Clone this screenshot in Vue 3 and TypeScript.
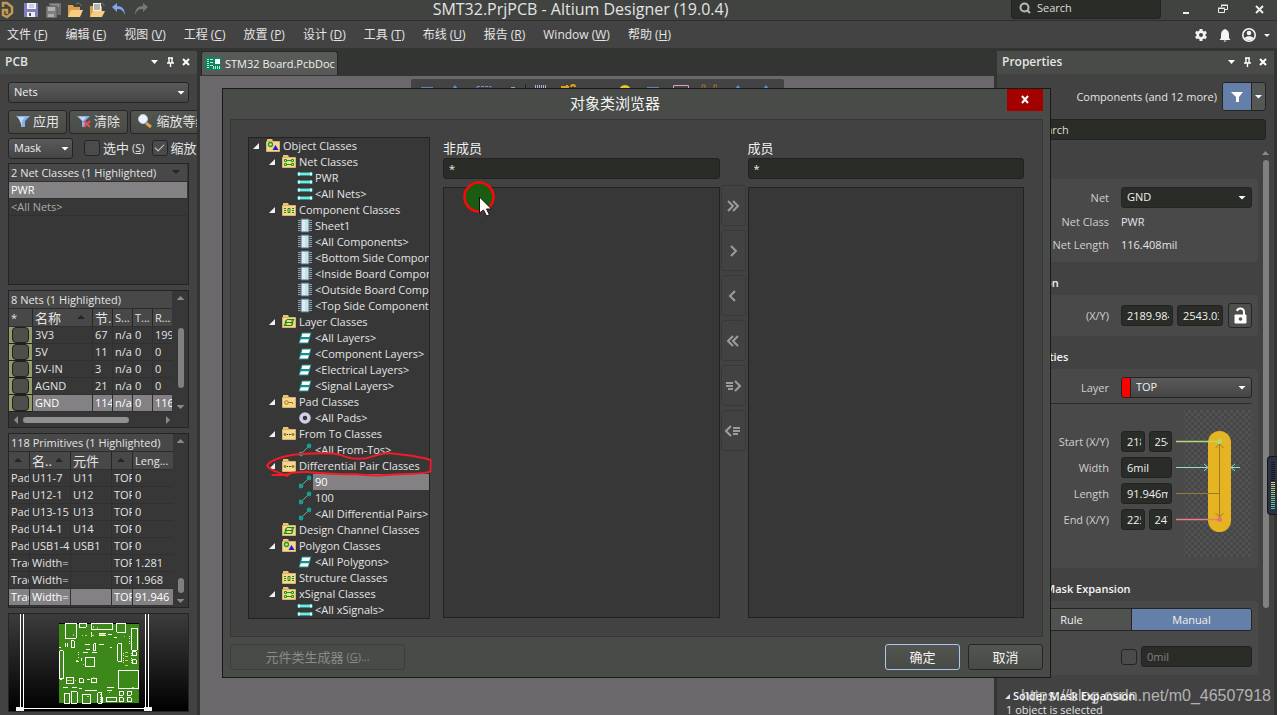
<script setup lang="ts">
import { ref } from 'vue'

interface MenuEntry { label: string; key: string }
interface TreeNode { level: number; icon: string; text: string; open?: boolean; selected?: boolean }

const menus: MenuEntry[] = [
  { label: '文件', key: 'F' },
  { label: '编辑', key: 'E' },
  { label: '视图', key: 'V' },
  { label: '工程', key: 'C' },
  { label: '放置', key: 'P' },
  { label: '设计', key: 'D' },
  { label: '工具', key: 'T' },
  { label: '布线', key: 'U' },
  { label: '报告', key: 'R' },
  { label: 'Window', key: 'W' },
  { label: '帮助', key: 'H' },
]

const tree: TreeNode[] = [
  { level: 0, icon: 'f-shape', text: 'Object Classes', open: true },
  { level: 1, icon: 'f-net', text: 'Net Classes', open: true },
  { level: 2, icon: 'net', text: 'PWR' },
  { level: 2, icon: 'net', text: '<All Nets>' },
  { level: 1, icon: 'f-comp', text: 'Component Classes', open: true },
  { level: 2, icon: 'chip', text: 'Sheet1' },
  { level: 2, icon: 'chip', text: '<All Components>' },
  { level: 2, icon: 'chip', text: '<Bottom Side Components>' },
  { level: 2, icon: 'chip', text: '<Inside Board Components>' },
  { level: 2, icon: 'chip', text: '<Outside Board Components>' },
  { level: 2, icon: 'chip', text: '<Top Side Components>' },
  { level: 1, icon: 'f-layer', text: 'Layer Classes', open: true },
  { level: 2, icon: 'layer', text: '<All Layers>' },
  { level: 2, icon: 'layer', text: '<Component Layers>' },
  { level: 2, icon: 'layer', text: '<Electrical Layers>' },
  { level: 2, icon: 'layer', text: '<Signal Layers>' },
  { level: 1, icon: 'f-pad', text: 'Pad Classes', open: true },
  { level: 2, icon: 'pad', text: '<All Pads>' },
  { level: 1, icon: 'f-dots', text: 'From To Classes', open: true },
  { level: 2, icon: 'pair', text: '<All From-Tos>' },
  { level: 1, icon: 'f-dots', text: 'Differential Pair Classes', open: true },
  { level: 2, icon: 'pair', text: '90', selected: true },
  { level: 2, icon: 'pair', text: '100' },
  { level: 2, icon: 'pair', text: '<All Differential Pairs>' },
  { level: 1, icon: 'f-layer', text: 'Design Channel Classes' },
  { level: 1, icon: 'f-shape', text: 'Polygon Classes', open: true },
  { level: 2, icon: 'layer', text: '<All Polygons>' },
  { level: 1, icon: 'f-comp', text: 'Structure Classes' },
  { level: 1, icon: 'f-net', text: 'xSignal Classes', open: true },
  { level: 2, icon: 'net', text: '<All xSignals>' },
]

const nets = [
  ['3V3', '67', 'n/a', '0', '199'],
  ['5V', '11', 'n/a', '0', '0'],
  ['5V-IN', '3', 'n/a', '0', '0'],
  ['AGND', '21', 'n/a', '0', '0'],
  ['GND', '114', 'n/a', '0', '116'],
]

const primitives = [
  ['Pad', 'U11-7', 'U11', 'TOP', '0'],
  ['Pad', 'U12-1', 'U12', 'TOP', '0'],
  ['Pad', 'U13-15', 'U13', 'TOP', '0'],
  ['Pad', 'U14-1', 'U14', 'TOP', '0'],
  ['Pad', 'USB1-4', 'USB1', 'TOP', '0'],
  ['Trac', 'Width=', '', 'TOP', '1.281'],
  ['Trac', 'Width=', '', 'TOP', '1.968'],
  ['Trac', 'Width=', '', 'TOP', '91.946'],
]

const moves = [
  { name: '全部添加', d: 'M3 3l5 5-5 5M8 3l5 5-5 5' },
  { name: '添加', d: 'M6 3l5 5-5 5' },
  { name: '移除', d: 'M10 3L5 8l5 5' },
  { name: '全部移除', d: 'M8 3L3 8l5 5M13 3L8 8l5 5' },
  { name: '添加选中', d: 'M10 3l5 5-5 5M1 5h7M1 8h7M3 11h5' },
  { name: '移除选中', d: 'M6 3L1 8l5 5M8 5h7M8 8h7M8 11h5' },
]

const tools = ['bar', 'tip', 'dash', 'dot', 'comb', 'route', 'none', 'via', 'bar', 'rect', 'rings', 'tip', 'tip']

const mode = ref('Manual')
const filterLeft = ref('*')
const filterRight = ref('*')
</script>

<template>
  <div class="app">
    <header class="titlebar">
      <div class="quick">
        <svg class="logo" width="14" height="18" viewBox="0 0 14 18" fill="none" stroke="#c39a54" stroke-width="2.500"><path d="M2 6V2h4l5 4v6l-5 4-4-2V9h4v4" /></svg>
        <button type="button" aria-label="Save"><svg width="16" height="16" viewBox="0 0 16 16"><path d="M1 1h14v14H1z" fill="#7d7fc0" /><path d="M4 1h9v6H4z" fill="#f2f2f5" /><path d="M6 3h5M6 5h5" stroke="#a9a9c4" /><path d="M4 10h8v5H4z" fill="#eceef2" /><path d="M6 11h2v3H6z" fill="#555" /></svg></button>
        <button type="button" aria-label="Save all"><svg width="16" height="16" viewBox="0 0 16 16"><path d="M4 1h12v12H4z" fill="#6f6f6f" /><path d="M6 2h8v3H6z" fill="#8e8e8e" /><path d="M1 4h11v12H1z" fill="#7f7f7f" stroke="#444541" stroke-width=".6" /><path d="M3 5h7v4H3z" fill="#b0b0b0" /><path d="M3 12h6v3H3z" fill="#adadad" /></svg></button>
        <button type="button" aria-label="Open"><svg width="16" height="16" viewBox="0 0 16 16"><path d="M1 3h5l1 2h6v10H1z" fill="#d9a24e" /><path d="M4 8h12l-3 7H1z" fill="#f6cd82" /><path d="M9 2c3-2 5 0 5 2" stroke="#5f7f9c" fill="none" /></svg></button>
        <button type="button" aria-label="Open project"><svg width="16" height="16" viewBox="0 0 16 16"><path d="M1 4h12v11H1z" fill="#d9a24e" /><path d="M4 1h8v9H4z" fill="#f2f2f2" /><path d="M5 3h6M5 5h6M5 7h6" stroke="#777" /><path d="M4 9h12l-3 6H1z" fill="#f6cd82" /><path d="M12 1c2 0 3 1 3 3" stroke="#5f7f9c" fill="none" /></svg></button>
        <button type="button" aria-label="Undo"><svg width="16" height="16" viewBox="0 0 16 16"><path d="M6 1L1 5l5 5V7c4 0 6 1 8 6 0-6-3-9-8-9z" fill="#7ea4ee" /></svg></button>
        <button type="button" aria-label="Redo"><svg width="16" height="16" viewBox="0 0 16 16"><path d="M10 1l5 4-5 5V7c-4 0-6 1-8 6 0-6 3-9 8-9z" fill="#777977" /></svg></button>
      </div>
      <h1>SMT32.PrjPCB - Altium Designer (19.0.4)</h1>
      <label class="topsearch">
        <svg width="12" height="12" viewBox="0 0 12 12" fill="none" stroke="#b9b9b9" stroke-width="2"><circle cx="5.500" cy="5.500" r="4" /><path d="M8 8l3 3" /></svg>
        <input type="text" placeholder="Search" aria-label="Search" />
      </label>
      <div class="winbtns">
        <button type="button" aria-label="Minimize"><svg width="12" height="12" viewBox="0 0 12 12"><path d="M3 9h6v2H3z" fill="#eee" /></svg></button>
        <button type="button" aria-label="Restore"><svg width="12" height="12" viewBox="0 0 12 12" fill="none" stroke="#eee"><path d="M1.500 5.500h6v4h-6zM1 5h7M4.500 4V2.500h6v4H8M4 2h7" /></svg></button>
        <button type="button" aria-label="Close"><svg width="12" height="12" viewBox="0 0 12 12" stroke="#eee" stroke-width="2"><path d="M2 3l7 7M9 3l-7 7" /></svg></button>
      </div>
    </header>

    <nav class="menubar">
      <button v-for="m in menus" :key="m.key" type="button">{{ m.label }} (<u>{{ m.key }}</u>)</button>
      <div class="account">
        <button type="button" aria-label="Settings"><svg width="14" height="14" viewBox="0 0 14 14"><circle cx="7" cy="7" r="3.300" fill="none" stroke="#f4f4f4" stroke-width="2.600" /><path d="M7 1v2M7 11v2M1.800 4l1.700 1M10.500 9l1.700 1M1.800 10l1.700-1M10.500 5l1.700-1" stroke="#f4f4f4" stroke-width="3" /></svg></button>
        <button type="button" aria-label="Notifications"><svg width="12" height="14" viewBox="0 0 12 14" fill="#f4f4f4"><path d="M6 1c3 1 4 3 4 6v3l1.500 2H.5L2 10V7c0-3 1-5 4-6zM4.500 12.500h3L6 14z" /></svg></button>
        <button type="button" aria-label="Account" class="user"><svg width="28" height="14" viewBox="0 0 28 14"><circle cx="7" cy="7" r="6.200" fill="none" stroke="#f4f4f4" stroke-width="1.600" /><circle cx="7" cy="5" r="2.300" fill="#f4f4f4" /><path d="M2.500 10c2-2.500 7-2.500 9 0-2 3-7 3-9 0z" fill="#f4f4f4" /><path d="M22 6h6l-3 3z" fill="#f4f4f4" /></svg></button>
      </div>
    </nav>

    <main class="workspace">
      <aside class="panel left">
        <div class="panelhead">
          <h2>PCB</h2>
          <svg width="38" height="12" viewBox="0 0 38 12"><path d="M1 4h7L4.500 8z" fill="#fff" /><path d="M18 2h5M19 2v5M22 2v5M17 7h7M20.500 7v4" stroke="#fff" stroke-width="1.400" /><path d="M33 3l6 6M39 3l-6 6" stroke="#fff" stroke-width="2" /></svg>
        </div>
        <div class="leftbody">
          <div class="combo wide"><select aria-label="Object kind"><option>Nets</option></select></div>
          <div class="btnrow">
            <button type="button" class="btn"><svg width="14" height="14" viewBox="0 0 14 14"><path d="M0 2h14L9 7v6H5V7z" fill="#8ab0ea" /><path d="M2 3h7L6 7v5z" fill="#c2d9fa" /></svg>应用</button>
            <button type="button" class="btn"><svg width="14" height="14" viewBox="0 0 14 14"><path d="M0 2h13L8 7v6H5V7z" fill="#8ab0ea" /><path d="M2 3h7L6 7z" fill="#c2d9fa" /><path d="M7 7l6 6M13 7l-6 6" stroke="#e25353" stroke-width="2" /></svg>清除</button>
            <button type="button" class="btn last"><svg width="16" height="16" viewBox="0 0 16 16"><path d="M9 10l5 4" stroke="#d9a24e" stroke-width="3" /><circle cx="6" cy="6" r="4.500" fill="#eaf3fd" stroke="#b9cde4" /></svg>缩放等级</button>
          </div>
          <div class="maskrow">
            <div class="combo mask"><select aria-label="Highlight mode"><option>Mask</option></select></div>
            <label><input type="checkbox" />选中 <span>(<u>S</u>)</span></label>
            <label class="zoomchk"><input type="checkbox" checked />缩放</label>
          </div>

          <section class="listbox classes">
            <table>
              <thead><tr><th>2 Net Classes (1 Highlighted)<i class="tri down"></i></th></tr></thead>
              <tbody>
                <tr class="sel"><td>PWR</td></tr>
                <tr><td class="dim">&lt;All Nets&gt;</td></tr>
              </tbody>
            </table>
          </section>

          <section class="listbox nets">
            <table>
              <caption>8 Nets (1 Highlighted)</caption>
              <colgroup><col class="w23" /><col /><col class="w20" /><col class="w20" /><col class="w20" /><col class="w20" /></colgroup>
              <thead><tr><th>*</th><th class="cjk">名称<i class="tri"></i></th><th class="cjk">节..</th><th>S...</th><th>T...</th><th>R...</th></tr></thead>
              <tbody>
                <tr v-for="n in nets" :key="n[0]" :class="{ sel: n[0] === 'GND' }">
                  <td class="swatch"><input type="checkbox" :aria-label="n[0]" /></td>
                  <td v-for="(c, i) in n" :key="i">{{ c }}</td>
                </tr>
              </tbody>
            </table>
            <div class="vscroll"><i class="tri"></i><b class="t1"></b><i class="tri down"></i></div>
            <div class="hscroll"><i class="tri lt"></i><b></b><i class="tri rt"></i></div>
          </section>

          <section class="listbox prims">
            <table>
              <caption>118 Primitives (1 Highlighted)</caption>
              <colgroup><col class="w20" /><col class="w41" /><col class="w41" /><col class="w21" /><col /></colgroup>
              <thead><tr><th><i class="tri"></i></th><th class="cjk">名..<i class="tri"></i></th><th class="cjk">元件</th><th><i class="tri"></i></th><th>Leng...</th></tr></thead>
              <tbody>
                <tr v-for="(p, r) in primitives" :key="r" :class="{ sel: r === 7 }">
                  <td v-for="(c, i) in p" :key="i">{{ c }}</td>
                </tr>
              </tbody>
            </table>
            <div class="vscroll"><i class="tri"></i><b class="t2"></b><i class="tri down"></i></div>
          </section>

          <div class="preview">
            <svg viewBox="27 372 537 293" preserveAspectRatio="xMinYMin meet" shape-rendering="crispEdges" fill="none" stroke="#fff" stroke-width="3">
              <path d="M178 399h238v241H178z" fill="#3c8818" stroke="none" />
              <path d="M178 400h238" stroke="#000" />
              <path d="M61 372v284M70 372v284M437 372v284M446 372v284M60 656h388M60 664h388" />
              <path d="M48 651h24v15H48zM432 651h24v15h-24z" fill="#f4f4f4" stroke="none" />
              <path d="M196 400h33v45h-33zM238 400h21v12h-21zM274 400h64v18h-64zM350 400h27v27h-27zM395 415h17v66h-17zM353 462h12v52h-12zM180 482h10v84h-10zM256 502h28v28h-28zM357 541h58v56h-58zM397 486h12v12h-12zM397 509h12v12h-12zM199 562h22v20h-22zM238 566h12v12h-12zM274 567h16v10h-16zM193 610h16v30h-16zM214 606h18v34h-18zM247 615h26v25h-26zM293 608h12v32h-12zM319 622h30v14h-30zM358 604h12v12h-12zM382 604h12v12h-12zM358 624h12v12h-12zM382 624h12v12h-12zM214 453h9v21h-9zM281 462h6v21h-6z" />
              <path d="M196 459v13M204 459v13M297 430h21M297 438h21M324 433h12M256 463h15M298 463h13M257 480h12M250 489h14M276 489h15M229 514h8M246 505v9M262 569h8M190 594h14M215 594h16M256 601h34M320 592h22M322 601h14M308 620v18M275 425v15M330 472h6M176 472h8M179 570h8M238 595h9M341 442h10" />
              <path d="M245 438h4M256 438h4M273 438h8M297 434h18M229 512h4M249 524h4M200 571h16M282 562v6M225 572h4M375 488h8M375 500h8M375 513h8M375 526h8M326 607h5M395 594h8M262 619h4" stroke="#d7d05c" />
              <path d="M218 435h5M278 412h5M371 440h5M290 414h5" stroke="#b9a9b9" stroke-width="5" />
              <path d="M389 438v24M370 489v36M395 489v36M236 486v20M302 606v30" stroke-dasharray="3 4" stroke="#e6eedc" />
            </svg>
          </div>
        </div>
      </aside>

      <section class="editor">
        <div class="tabs">
          <a href="#board" class="tab"><svg width="16" height="13" viewBox="0 0 16 13"><path d="M0 0h16v13H0z" fill="#0c8560" /><path d="M10 2h5v5h-5z" fill="#f2fff8" /><path d="M2 2.500h2M2 4.500h2M2 6.500h2M2 8.500h2M2 10.500h2M5 2.500h3M5 5.500h3M5 8.500h3M8.500 9v3M10.500 9v3M12.500 9v3M14.500 9v3" stroke="#c4e8d8" fill="none" /></svg>STM32 Board.PcbDoc</a>
        </div>
        <div class="canvas">
          <div class="toolbar">
            <button v-for="(t, i) in tools" :key="i" type="button" :class="{ sep: i === 3 }" :aria-label="'Tool ' + (i + 1)">
              <svg width="16" height="16" viewBox="0 0 16 16" fill="none">
                <path v-if="t === 'bar'" d="M2 3h12v8H2z" fill="#5d86b4" />
                <path v-else-if="t === 'tip'" d="M8 1l3 4H5z" fill="#5c8fd6" />
                <path v-else-if="t === 'dash'" d="M1 2.500h14v11H1z" stroke="#6f8ce0" stroke-dasharray="3 1" />
                <path v-else-if="t === 'dot'" d="M7 3h4v8H7z" fill="#6fb0d8" />
                <path v-else-if="t === 'comb'" d="M3.500 1v6M5.500 1v6M7.500 1v6M9.500 1v6M11.500 1v6M13.500 1v6" stroke="#9fb4d2" />
                <path v-else-if="t === 'route'" d="M1 3h8M7 1v4M11 3a2 2 0 0 1 4 0" stroke="#e2a01c" stroke-width="2" />
                <circle v-else-if="t === 'via'" cx="8" cy="7" r="6" fill="#ecc626" />
                <path v-else-if="t === 'rect'" d="M.5 1.500h15v12H.5z" stroke="#e29ad0" />
                <path v-else-if="t === 'rings'" d="M1 4V1h3v3M13 4V1h3v3" stroke="#a07a26" />
              </svg>
            </button>
          </div>
        </div>
      </section>

      <aside class="panel right">
        <div class="panelhead">
          <h2>Properties</h2>
          <svg width="38" height="12" viewBox="0 0 38 12"><path d="M1 4h7L4.500 8z" fill="#fff" /><path d="M18 2h5M19 2v5M22 2v5M17 7h7M20.500 7v4" stroke="#fff" stroke-width="1.400" /><path d="M33 3l6 6M39 3l-6 6" stroke="#fff" stroke-width="2" /></svg>
        </div>
        <div class="filterrow">
          <span>Components (and 12 more)</span>
          <div class="split">
            <button type="button" class="on" aria-label="Filter"><svg width="12" height="12" viewBox="0 0 12 12"><path d="M0 1h12L8 6v5H5V6z" fill="#fff" /></svg></button>
            <button type="button" aria-label="Filter options"><i class="caret"></i></button>
          </div>
        </div>
        <div class="searchrow"><input class="field" type="text" placeholder="Search" aria-label="Search properties" /></div>
        <div class="propscroll">
          <div class="props">
            <h3>Net</h3>
            <div class="card netcard">
              <div class="prow"><label for="net">Net</label><div class="ctl combo dark"><select id="net"><option>GND</option></select></div></div>
              <div class="prow text"><span>Net Class</span><output class="ctl">PWR</output></div>
              <div class="prow text"><span>Net Length</span><output class="ctl">116.408mil</output></div>
            </div>
            <h3>Location</h3>
            <div class="card loccard">
              <div class="prow"><label for="locx">(X/Y)</label>
                <div class="ctl xy">
                  <input id="locx" class="field lx" value="2189.984mil" />
                  <input class="field ly" aria-label="Y" value="2543.03mil" />
                  <button type="button" class="lock" aria-label="Lock"><svg width="14" height="18" viewBox="0 0 14 18"><path d="M2 8h11v8H2z" fill="#fff" stroke="#fff" stroke-linejoin="round" /><path d="M4 4c1-4 7-3 7 1v4" fill="none" stroke="#fff" stroke-width="2" /><circle cx="7.500" cy="12" r="1.800" fill="#555" /></svg></button>
                </div>
              </div>
            </div>
            <h3>Properties</h3>
            <div class="card trackcard">
              <div class="prow"><label for="layer">Layer</label><div class="ctl combo layer"><select id="layer"><option>TOP</option></select></div></div>
              <hr />
              <div class="geometry">
                <div class="geofields">
                  <div class="grow"><label for="sx">Start (X/Y)</label><div><input id="sx" class="field" value="2189" /><input class="field" aria-label="Start Y" value="2543" /></div></div>
                  <div class="grow"><label for="wd">Width</label><div><input id="wd" class="field" value="6mil" /></div></div>
                  <div class="grow"><label for="ln">Length</label><div><input id="ln" class="field" value="91.946mil" /></div></div>
                  <div class="grow"><label for="ex">End (X/Y)</label><div><input id="ex" class="field" value="2253" /><input class="field" aria-label="End Y" value="2478" /></div></div>
                </div>
                <svg width="76" height="147" viewBox="0 0 76 147" fill="none">
                  <defs><pattern id="chk" width="6" height="6" patternUnits="userSpaceOnUse"><path d="M0 0h3v3H0zM3 3h3v3H3z" fill="#525252" /></pattern></defs>
                  <path d="M8 0h68v147H8z" fill="#464646" /><path d="M8 0h68v147H8z" fill="url(#chk)" />
                  <rect x="32" y="21" width="23" height="101" rx="11.500" fill="#e6b422" />
                  <path d="M43.500 34v73M39.500 38l4-4 4 4M39.500 103l4 4 4-4" stroke="#9a7a1c" />
                  <path d="M0 83.500h43" stroke="#9a7a2c" />
                  <path d="M0 31.500h43" stroke="#b6d87a" stroke-width="1.500" /><circle cx="43.500" cy="31.500" r="2.500" fill="#a8dc74" />
                  <path d="M0 109.500h43" stroke="#e88080" stroke-width="1.500" /><circle cx="43.500" cy="109.500" r="2.500" fill="#ee6e78" />
                  <path d="M0 57.500h31M28 54l4 3.500-4 3.500M64 57.500h-9M59 54l-4 3.500 4 3.500" stroke="#8edfd6" />
                </svg>
              </div>
            </div>
            <h3>Paste Mask Expansion</h3>
            <div class="card maskcard">
              <div class="toggle">
                <button v-for="o in ['Rule', 'Manual']" :key="o" type="button" :class="{ on: mode === o }" @click="mode = o">{{ o }}</button>
              </div>
              <div class="exprow"><input type="checkbox" aria-label="Tented" /><input class="field" aria-label="Expansion" value="0mil" disabled /></div>
            </div>
            <h3 class="last">Solder Mask Expansion</h3>
            <p class="status">1 object is selected</p>
          </div>
          <div class="pbar"><i class="tri"></i><b></b></div>
        </div>
      </aside>
    </main>

    <div class="meter"></div>

    <div class="dialog" role="dialog" aria-labelledby="dlgtitle">
      <div class="dlghead">
        <h2 id="dlgtitle">对象类浏览器</h2>
        <button type="button" aria-label="关闭"><svg width="12" height="12" viewBox="0 0 12 12" stroke="#fff" stroke-width="2"><path d="M3 2l6 7M9 2l-6 7" /></svg></button>
      </div>
      <div class="dlgbody">
        <div class="treewrap">
          <ul class="tree" role="tree">
            <li v-for="(n, i) in tree" :key="i" :class="['lv' + n.level, { picked: n.selected }]" role="treeitem" :aria-selected="!!n.selected">
              <i class="twist" :class="{ open: n.open }"></i>
              <svg width="16" height="16" viewBox="0 0 16 16" fill="none">
                <template v-if="n.icon.startsWith('f-')">
                  <path d="M2 1h5l1 2H2z" fill="#e6c180" /><path d="M1.500 3.500h13v10h-13z" fill="#f5d692" stroke="#dcb266" />
                  <template v-if="n.icon === 'f-shape'"><circle cx="5.500" cy="6.500" r="2" stroke="#18a018" stroke-width="1.300" /><path d="M10.500 7l3 5H7.500z" fill="#1c18d8" /></template>
                  <path v-else-if="n.icon === 'f-net'" d="M3.500 5.500h2v2h-2zM10.500 5.500h2v2h-2zM3.500 9.500h2v2h-2zM10.500 9.500h2v2h-2zM5.500 6.500h5M5.500 10.500h5" stroke="#149c14" />
                  <path v-else-if="n.icon === 'f-comp'" d="M3 6.500h2M3 8.500h2M3 10.500h2M11 6.500h2M11 8.500h2M11 10.500h2M7 6.500h2v4H7z" stroke="#188a18" />
                  <path v-else-if="n.icon === 'f-layer'" d="M6 5.500h7l-2 3H4zM5 8.500h7l-1 3H3zM5 6v5M11 6v5" stroke="#138c13" />
                  <template v-else-if="n.icon === 'f-pad'"><circle cx="5.500" cy="8.500" r="1.800" stroke="#9a7d14" /><path d="M7.500 8.500h4v1.500" stroke="#9a7d14" /></template>
                  <template v-else><circle cx="4" cy="8.500" r="1.400" fill="#8a8d1c" /><circle cx="12" cy="8.500" r="1.400" fill="#8a8d1c" /><path d="M6 8.500h1M8 8.500h1M9.500 8.500h.8" stroke="#222" /></template>
                </template>
                <template v-else-if="n.icon === 'net'">
                  <path d="M2 4h12M2 12h12" stroke="#1d9a90" stroke-width="4" stroke-linecap="round" /><path d="M2 4h12M2 12h12" stroke="#bdf5ef" stroke-width="1.600" />
                  <path d="M1 4h2M13 4h2M1 12h2M13 12h2" stroke="#d6fffb" stroke-width="3" />
                </template>
                <template v-else-if="n.icon === 'chip'">
                  <path d="M1 2.500h14M1 4.500h14M1 6.500h14M1 8.500h14M1 10.500h14M1 12.500h14" stroke="#8aa3ad" /><path d="M4 1h8v13H4z" fill="#c6e1ea" stroke="#55707a" /><path d="M5 2h3v11H5z" fill="#dcecf2" />
                </template>
                <template v-else-if="n.icon === 'layer'">
                  <path d="M4.500 2.500h10L13 8H3zM3 8h10l-1.500 5.500h-10z" fill="#12908a" /><path d="M5.500 3.500h8l-1.300 3.500H4.500zM4 9.300h8l-1.300 3.200H2.500z" fill="#fff" />
                </template>
                <circle v-else-if="n.icon === 'pad'" cx="8" cy="8" r="4" stroke="#cfcfe8" stroke-width="3.500" />
                <template v-else>
                  <path d="M4 12l8-8" stroke="#8d9997" /><circle cx="4" cy="12" r="2.400" fill="#14a08e" /><circle cx="12" cy="4" r="2.400" fill="#14a08e" />
                </template>
              </svg>
              <span>{{ n.text }}</span>
            </li>
          </ul>
          <svg class="ring" width="172" height="28" viewBox="102 240 516 84" fill="none" stroke="#f01c26" stroke-width="6" stroke-linejoin="round" stroke-linecap="round">
            <path d="M127 315h36l24-7M172 318c-30-12-54-18-61-31 8-16 40-26 79-33 70-6 120-8 145 2 25 11 50 12 72 9 25-6 45-16 73-15 50 5 90 10 122 20l-1 35c-21 7-61 6-101 8-60 7-80 3-120 0-50-1-120-3-150-8-30 4-48-2-58 13" />
          </svg>
        </div>

        <div class="pane">
          <label for="fl">非成员</label>
          <input id="fl" v-model="filterLeft" class="field" />
          <div class="members">
            <svg class="pointer" width="34" height="40" viewBox="0 0 34 40"><circle cx="17" cy="17" r="14.500" fill="#1a5c12" stroke="#fb0808" stroke-width="2.500" /><path d="M17.500 17v16l4-3 3 6 3-1-3-6h5z" fill="#fff" stroke="#111" /></svg>
          </div>
        </div>
        <div class="moves">
          <button v-for="m in moves" :key="m.name" type="button" disabled :aria-label="m.name"><svg width="16" height="16" viewBox="0 0 16 16" fill="none" stroke="#9c9c9c" stroke-width="2"><path :d="m.d" /></svg></button>
        </div>
        <div class="pane">
          <label for="fr">成员</label>
          <input id="fr" v-model="filterRight" class="field" />
          <div class="members"></div>
        </div>
      </div>
      <div class="dlgfoot">
        <button type="button" class="btn gen" disabled>元件类生成器 <small>(<u>G</u>)...</small></button>
        <button type="button" class="btn ok">确定</button>
        <button type="button" class="btn">取消</button>
      </div>
    </div>

    <div class="watermark">https://blog.csdn.net/m0_46507918</div>
  </div>
</template>

<style>
html, body { background: #fff; }
body { overflow: hidden; }
</style>

<style scoped>
.app {
  position: relative;
  display: flex;
  flex-direction: column;
  height: 100vh;
  margin-right: 4px;
  overflow: hidden;
  background: #333532;
  color: #e4e4e4;
  font-family: "Open Sans", "Noto Sans CJK SC", sans-serif;
  font-size: 11px;
  line-height: 16px;
}
.app *, .app *::before, .app *::after { box-sizing: border-box; }
button, input, select { font: inherit; color: inherit; margin: 0; padding: 0; }
button { background: none; border: 0; }
h1, h2, h3, p, ul { margin: 0; padding: 0; font-weight: normal; }
svg { display: block; flex: none; }
i.caret { display: block; width: 8px; height: 4px; background: #fff; clip-path: polygon(0 0, 100% 0, 50% 100%); }
.tri { display: block; flex: none; width: 8px; height: 4px; background: #8a8a8a; clip-path: polygon(50% 0, 100% 100%, 0 100%); }
.tri.down { clip-path: polygon(0 0, 100% 0, 50% 100%); }
.tri.lt { width: 4px; height: 8px; clip-path: polygon(100% 0, 100% 100%, 0 50%); }
.tri.rt { width: 4px; height: 8px; clip-path: polygon(0 0, 100% 50%, 0 100%); }

.titlebar { display: flex; flex: none; height: 21px; background: #40433f; border-bottom: 1px solid #2d2f2c; }
.quick { display: flex; gap: 6px; width: 150px; padding-left: 1px; align-items: center; overflow: hidden; }
.quick .logo { margin-right: 2px; }
.titlebar h1 { flex: 1; text-align: center; font-size: 16px; line-height: 19px; white-space: nowrap; }
.topsearch { display: flex; align-items: center; gap: 6px; width: 150px; height: 19px; padding: 0 0 3px 7px; background: #2a2c28; border: 1px solid #222; border-top: 0; border-radius: 0 0 4px 4px; }
.topsearch input { width: 110px; height: 16px; background: none; border: 0; outline: 0; }
.topsearch input::placeholder, .searchrow input::placeholder { color: #dcdcdc; opacity: 1; }
.winbtns { display: flex; gap: 25px; width: 116px; padding: 0 0 2px 19px; align-items: center; }

.menubar { display: flex; flex: none; gap: 18px; height: 27px; padding-left: 7px; align-items: center; background: #434343; font-size: 12px; white-space: nowrap; }
.account { display: flex; gap: 11px; margin-left: auto; padding-right: 7px; align-items: center; }

.workspace { display: grid; flex: 1; grid-template-columns: 197px minmax(0, 1fr) 277px; column-gap: 3px; min-height: 0; padding: 3px 3px 0 0; }
.panel { display: flex; flex-direction: column; min-width: 0; min-height: 0; background: #424242; overflow: hidden; }
.panelhead { display: flex; flex: none; align-items: center; justify-content: space-between; height: 23px; padding: 0 9px 1px 5px; background: #484b47; }
.panelhead h2 { font-size: 12px; font-weight: 600; }
.panelhead svg { overflow: visible; }

.combo { display: grid; align-items: center; height: 21px; background: linear-gradient(#5a5a5a, #454545); border: 1px solid #242424; border-radius: 3px; }
.combo::after { content: ""; grid-area: 1 / 1; justify-self: end; width: 8px; height: 4px; margin-right: 3px; background: #fff; clip-path: polygon(0 0, 100% 0, 50% 100%); pointer-events: none; }
.ctl.combo::after { margin-right: 5px; }
.combo select { grid-area: 1 / 1; width: 100%; height: 19px; padding: 0 18px 1px 5px; appearance: none; background: none; border: 0; outline: 0; color: #f0f0f0; }
.combo.dark { background: #2a2c28; }
.field { min-width: 0; height: 21px; padding: 0 3px 0 5px; background: #2a2c28; border: 1px solid #222; border-radius: 3px; color: #f0f0f0; outline: 0; }
.field:disabled { color: #808080; }
input[type="checkbox"] { flex: none; display: grid; place-items: center; width: 16px; height: 16px; appearance: none; background: #4b4b4b; border: 1px solid #242424; border-radius: 3px; }
input[type="checkbox"]:checked::after { content: ""; width: 9px; height: 5px; margin-bottom: 3px; border: solid #d0d0d0; border-width: 0 0 1px 1px; transform: rotate(-45deg); }
.btn { display: flex; align-items: center; justify-content: center; gap: 3px; background: linear-gradient(#535551, #484a46); border: 1px solid #252624; border-radius: 3px; font-size: 13px; white-space: nowrap; }

.leftbody { display: flex; flex: 1; flex-direction: column; min-height: 0; padding: 8px 8px 3px; }
.btnrow { display: flex; gap: 2px; margin: 7px -8px 0 0; }
.btnrow .btn { flex: none; width: 59px; height: 24px; padding-bottom: 2px; }
.btnrow .btn.last { width: 86px; }
.maskrow { display: flex; align-items: center; height: 21px; margin: 4px -8px 0 0; overflow: hidden; white-space: nowrap; }
.combo.mask { flex: none; width: 65px; }
.maskrow label { display: flex; flex: none; align-items: center; gap: 3px; margin-left: 11px; padding-bottom: 1px; font-size: 13px; }
.maskrow label span { font-size: 11px; }
.maskrow .zoomchk { margin-left: 7px; }

.listbox { position: relative; flex: none; background: #373737; border: 1px solid #242424; }
.classes { height: 122px; margin-top: 4px; padding-right: 1px; }
.nets { height: 138px; margin-top: 5px; }
.prims { height: 175px; margin-top: 5px; }
table { width: 100%; table-layout: fixed; border-collapse: separate; border-spacing: 0; white-space: nowrap; }
.nets table { width: calc(100% - 16px); }
.prims table { width: calc(100% - 15px); }
caption { height: 18px; padding: 1px 0 0 2px; text-align: left; background: #484848; border-bottom: 1px solid #2c2c2c; }
th, td { height: 17px; padding: 0 0 0 2px; overflow: hidden; text-align: left; font-weight: normal; border-bottom: 1px solid #303030; }
td + td { border-left: 1px solid #303030; }
th { position: relative; height: 18px; background: #484848; }
.nets th + th, .prims th + th { border-left: 1px solid #262626; }
th .tri { position: absolute; right: 7px; top: 6px; background: #242424; }
th.cjk { font-size: 13px; }
.dim { color: #a9a9a9; }
.sel td { background: #848184; color: #fff; }
td.swatch, .sel td.swatch { padding: 0; background: #949b6b; border-color: #202020; }
td.swatch input { width: 17px; height: 16px; margin: 0 3px; border-radius: 4px; background: #4d4f4b; border-color: #202020; }
.w20 { width: 20px; } .w21 { width: 21px; } .w23 { width: 23px; } .w41 { width: 41px; }
.vscroll { position: absolute; top: 0; right: 0; bottom: 0; display: flex; flex-direction: column; align-items: center; width: 15px; padding: 5px 0 4px; }
.nets .vscroll { bottom: 14px; }
.vscroll b { width: 6px; background: #808080; border-radius: 3px; }
.t1 { flex: none; height: 60px; margin: 28px 0 auto; }
.t2 { flex: none; height: 15px; margin: auto 0 6px; }
.hscroll { position: absolute; left: 0; right: 15px; bottom: 2px; display: flex; align-items: center; height: 10px; padding: 0 3px 0 5px; }
.hscroll b { width: 106px; height: 6px; margin: 0 auto 0 5px; background: #909090; border-radius: 3px; }
.preview { flex: 1; min-height: 0; margin-top: 5px; border: 1px solid #242424; background: linear-gradient(#3c3c3c, #000); overflow: hidden; }
.preview svg { width: 100%; }

.editor { display: flex; flex-direction: column; min-width: 0; }
.tabs { display: flex; height: 25px; padding-left: 1px; }
.tab { display: flex; align-items: center; gap: 4px; height: 24px; padding: 0 2px 0 3px; background: #585a57; border: 1px solid #272826; border-bottom: 0; border-radius: 3px 3px 0 0; color: #f0f0f0; text-decoration: none; white-space: nowrap; }
.canvas { flex: 1; background: #6b686b; }
.toolbar { display: flex; width: 373px; height: 28px; margin: 3px auto 0; padding: 5px 3px 0; background: #434343; border-radius: 2px; }
.toolbar button { display: flex; flex: 1; justify-content: center; height: 20px; border-right: 1px solid transparent; }
.toolbar .sep { border-right-color: #222; }

.filterrow { display: flex; align-items: center; justify-content: flex-end; gap: 5px; padding: 8px 8px 0; }
.split { display: flex; height: 29px; border: 1px solid #242424; border-radius: 3px; background: #555754; overflow: hidden; }
.split button { display: grid; place-items: center; width: 13px; }
.split button.on { width: 29px; background: #6480a8; border-right: 1px solid #242424; }
.searchrow { padding: 8px 8px 0; }
.searchrow input { width: 100%; padding-left: 28px; }
.propscroll { display: flex; flex: 1; min-height: 0; margin-top: 8px; }
.props { flex: 1; min-width: 0; padding-left: 8px; }
.props h3 { position: relative; height: 20px; margin: 11px 0 2px; padding-left: 8px; font-size: 11px; font-weight: 600; line-height: 20px; color: #f4f4f4; white-space: nowrap; }
.props h3::before { content: ""; display: block; position: absolute; left: 0; top: 8px; width: 5px; height: 5px; background: #e0e0e0; clip-path: polygon(100% 0, 100% 100%, 0 100%); }
.props h3:first-child { margin: 0; padding-top: 4px; height: 31px; }
.props h3.last { margin: 11px 0 0; height: 17px; }
.status { padding-left: 1px; line-height: 14px; }
.card { padding: 8px 6px; background: #494949; border-radius: 4px; }
.prow { display: flex; gap: 12px; align-items: center; min-height: 21px; }
.prow label, .prow > span { flex: 1; text-align: right; color: #cfcfcf; white-space: nowrap; }
.prow .ctl { flex: none; width: 131px; }
.prow.text { min-height: 23px; }
.netcard { height: 83px; }
.netcard .prow:first-child { margin-bottom: 2px; }
.xy { display: flex; align-items: center; gap: 4px; }
.lx { width: 52px; }
.ly { width: 46px; }
.lock { display: grid; place-items: center; width: 24px; height: 25px; margin-left: 1px; background: #4d4f4b; border: 1px solid #242424; border-radius: 3px; }
.loccard { height: 41px; }
.layer { background: linear-gradient(90deg, #f00 8px, #242424 8px, #242424 9px, transparent 9px), linear-gradient(#5a5a5a, #454545); }
.layer select { padding-left: 14px; }
.trackcard { height: 199px; }
.trackcard hr { height: 1px; margin: 5px 0 6px; border: 0; background: #2c2c2c; }
.geometry { display: flex; gap: 4px; }
.geofields { display: flex; flex: 1; flex-direction: column; gap: 5px; padding-top: 21px; }
.grow { display: flex; gap: 12px; align-items: center; }
.grow label { flex: 1; text-align: right; color: #cfcfcf; }
.grow > div { display: flex; gap: 4px; width: 51px; }
.grow input { flex: 1; width: 0; }
.maskcard { height: 74px; padding-top: 7px; }
.toggle { display: flex; height: 23px; border: 1px solid #242424; border-radius: 3px; background: #50524f; overflow: hidden; color: #f0f0f0; }
.toggle button { flex: 1; }
.toggle button.on { background: #6480a8; border-left: 1px solid #242424; }
.exprow { display: flex; justify-content: flex-end; align-items: center; gap: 4px; margin-top: 15px; }
.exprow .field { width: 111px; }
.pbar { display: flex; flex: none; flex-direction: column; align-items: center; width: 17px; padding: 3px 0 107px; }
.props { margin-right: -1px; }
.pbar .tri { width: 7px; margin-bottom: 5px; }
.pbar b { flex: 1; width: 6px; background: #808080; border-radius: 3px; }

.meter { position: absolute; right: 0; top: 456px; width: 10px; height: 59px; border: solid #14161f; border-width: 1px 0 1px 1px; border-radius: 4px 0 0 4px; background:
  repeating-linear-gradient(transparent 0 1px, #2c3142 1px 2px) 3px 5px / 4px 48px no-repeat,
  linear-gradient(#161824 20px, #d8d86a 20px, #8ccf84 34px, #46c0b4 48px) 3px 5px / 4px 48px no-repeat, #2c3142; }

.dialog { position: absolute; top: 88px; right: 226px; bottom: 37px; left: 222px; display: flex; flex-direction: column; background: #484b47; border: 1px solid #191a18; }
.dlghead { display: flex; flex: none; height: 30px; padding-right: 7px; }
.dlghead h2 { flex: 1; text-align: center; font-size: 15px; line-height: 29px; color: #f4f4f4; }
.dlghead button { display: grid; place-items: center; width: 36px; height: 22px; background: #a30000; }
.dlgbody { display: flex; flex: 1; min-height: 0; margin: 0 7px; padding: 17px 18px 17px 17px; background: #424242; border: 1px solid #353733; }
.treewrap { position: relative; flex: none; width: 182px; margin-right: 13px; background: #373737; border: 1px solid #222; }
.tree { height: 100%; overflow: hidden; list-style: none; }
.tree li { display: flex; align-items: center; height: 16px; white-space: nowrap; }
.tree span { flex: 1; padding-left: 2px; overflow: hidden; }
.picked span { background: #848184; color: #fff; }
.lv0 { padding-left: 4px; } .lv1 { padding-left: 20px; } .lv2 { padding-left: 36px; }
.twist { flex: none; width: 12px; height: 6px; }
.twist.open::before { content: ""; display: block; width: 6px; height: 6px; background: #f0f0f0; clip-path: polygon(100% 0, 100% 100%, 0 100%); }
.ring { position: absolute; left: 15px; top: 312px; }
.pane { display: flex; flex: 1; flex-direction: column; min-width: 0; }
.pane label { margin-top: 2px; padding-bottom: 1px; font-size: 13px; line-height: 18px; color: #f0f0f0; }
.members { position: relative; flex: 1; margin: 8px 0 1px; background: #373737; border: 1px solid #222; }
.pointer { position: absolute; left: 18px; top: -8px; }
.moves { display: flex; flex: none; flex-direction: column; gap: 4px; width: 28px; padding: 48px 2px 0 1px; }
.moves button { display: grid; place-items: center; height: 41px; border: 1px solid #393939; border-radius: 3px; }
.dlgfoot { display: flex; flex: none; gap: 8px; padding: 7px 7px 7px; }
.dlgfoot .btn { width: 75px; height: 26px; color: #f4f4f4; }
.dlgfoot .ok { border-color: #a8c8f0; }
.dlgfoot .gen { width: 175px; margin-right: auto; background: none; border-color: #3c3e3b; color: #8a8c89; }
.dlgfoot small { font-size: 11px; }
.watermark { position: absolute; right: 6px; bottom: 10px; font-family: "Liberation Sans", Arial, sans-serif; font-size: 16px; line-height: 18px; color: rgba(255, 255, 255, 0.6); pointer-events: none; }
</style>
